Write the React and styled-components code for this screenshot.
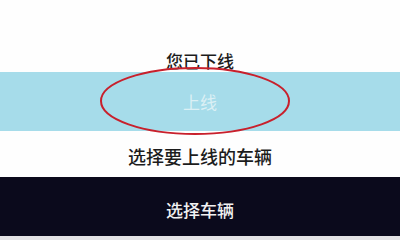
import React from 'react';
import styled, { createGlobalStyle } from 'styled-components';

const GlobalStyle = createGlobalStyle`
  html, body {
    margin: 0;
    padding: 0;
    background: #ffffff;
  }
  body {
    font-family: "Noto Sans CJK SC", "Noto Sans", sans-serif;
  }
`;

const Screen = styled.div`
  width: 400px;
  height: 240px;
  display: flex;
  flex-direction: column;
  overflow: hidden;
  background: #fefefe;
`;

const StatusArea = styled.div`
  height: 72px;
  display: flex;
  align-items: flex-end;
  justify-content: center;
  padding-bottom: 3px;
  box-sizing: border-box;
`;

const Caption = styled.span`
  font-size: ${p => p.size || 17}px;
  line-height: 1;
  color: ${p => p.color || '#1c1c1c'};
  font-weight: ${p => p.weight || 500};
`;

const Band = styled.div`
  position: relative;
  height: 59px;
  display: flex;
  align-items: center;
  justify-content: center;
  background: ${p => p.bg};
  padding-top: ${p => p.shift || 0}px;
  box-sizing: border-box;
`;

const Hint = styled.div`
  height: 46px;
  display: flex;
  align-items: center;
  justify-content: center;
  padding-top: 4px;
  box-sizing: border-box;
`;

const Footer = styled.div`
  flex: 1;
  background: #e4e4e6;
`;

const Circle = styled.svg`
  position: absolute;
  left: 100px;
  top: -6px;
  overflow: visible;
`;

export default function App() {
  return (
    <Screen>
      <GlobalStyle />
      <StatusArea>
        <Caption>您已下线</Caption>
      </StatusArea>
      <Band bg="#a6dcea">
        <Caption color="#dcf0f5" weight={400}>上线</Caption>
        <Circle width="192" height="68" viewBox="0 0 192 68">
          <ellipse cx="95" cy="35" rx="94" ry="33" fill="none" stroke="#c8202c" strokeWidth="2" />
        </Circle>
      </Band>
      <Hint>
        <Caption size={18}>选择要上线的车辆</Caption>
      </Hint>
      <Band bg="#0b0a1c" shift={6}>
        <Caption color="#f2f2f2">选择车辆</Caption>
      </Band>
      <Footer />
    </Screen>
  );
}
